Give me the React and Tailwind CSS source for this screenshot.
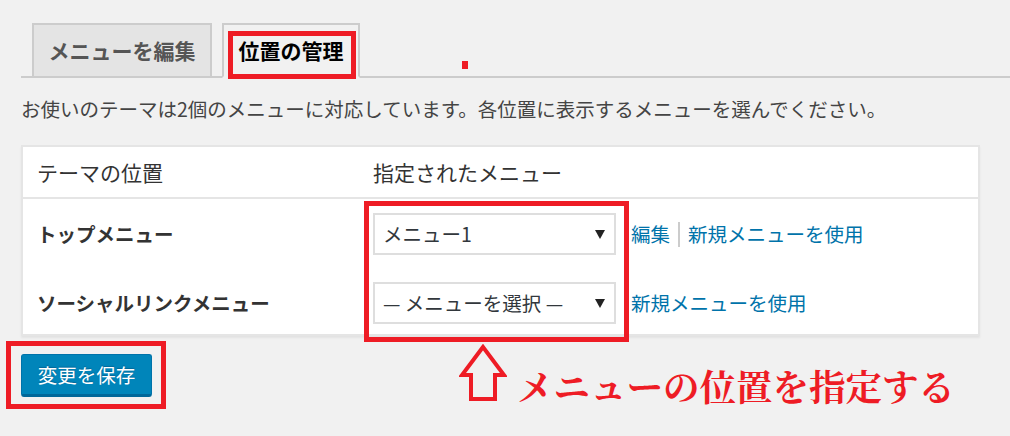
import React from "react";

const font = { fontFamily: '"Noto Sans CJK JP", "Noto Sans", sans-serif' };

function Arrow() {
  return (
    <svg width="48" height="58" viewBox="0 0 48 58" className="block">
      <polygon
        points="24,3 3,31 12,31 12,55 36,55 36,31 45,31"
        fill="none"
        stroke="#ee1c25"
        strokeWidth="4"
        strokeLinejoin="miter"
      />
    </svg>
  );
}

function Caret() {
  return (
    <svg width="10" height="9" viewBox="0 0 10 9" className="block">
      <polygon points="0,0 10,0 5,9" fill="#222" />
    </svg>
  );
}

function Select({ label }) {
  return (
    <div className="flex items-center justify-between w-[243px] h-[42px] border-2 border-[#dedede] bg-white pl-[8px] pr-[9px] text-[19.5px] text-[#32373c] leading-none">
      <span>{label}</span>
      <Caret />
    </div>
  );
}

export default function App() {
  return (
    <div className="w-full min-h-[436px] bg-[#f1f1f1] overflow-hidden" style={font}>
      {/* Tabs */}
      <div className="relative ml-[21px] mt-[23px] flex items-end gap-[10px] pl-[11px] border-b-2 border-[#cccccc] h-[55px]">
        <div className="-mb-[2px] flex items-center justify-center w-[180px] h-[55px] border-2 border-[#cccccc] bg-[#e4e4e4] text-[21px] font-bold text-[#555555] leading-none">
          メニューを編集
        </div>
        <div className="relative -mb-[2px] flex items-center justify-center w-[138px] h-[55px] border-2 border-[#cccccc] border-b-[#f1f1f1] bg-[#f1f1f1] text-[21px] font-bold text-black leading-none">
          位置の管理
          <div className="absolute left-[4px] top-[6px] w-[128px] h-[48px] border-[5px] border-[#ee1c25]" />
        </div>
        <div className="absolute left-[441px] top-[38px] w-[6px] h-[8px] bg-[#ee1c25]" />
      </div>

      {/* Description */}
      <p className="ml-[21px] mt-[17px] text-[19.5px] leading-[28px] text-[#444444]">
        お使いのテーマは2個のメニューに対応しています。各位置に表示するメニューを選んでください。
      </p>

      {/* Table */}
      <div className="relative ml-[21px] mt-[22px] w-[959px] border-2 border-[#e5e5e5] bg-white shadow-[0_2px_2px_rgba(0,0,0,0.06)]">
        <div className="flex items-center h-[52px] border-b-2 border-[#e5e5e5] text-[21px] text-[#333333] leading-none">
          <div className="w-[350px] pl-[14px]">テーマの位置</div>
          <div>指定されたメニュー</div>
        </div>
        <div className="flex flex-col gap-[27px] pt-[14px] pb-[10px]">
          <div className="flex items-center h-[42px]">
            <div className="w-[350px] pl-[14px] text-[19.5px] font-bold text-[#333333] leading-none">
              トップメニュー
            </div>
            <Select label="メニュー1" />
            <div className="flex items-center ml-[15px] text-[19.5px] text-[#0073aa] leading-none">
              <span>編集</span>
              <span className="mx-[8px] w-[2px] h-[25px] bg-[#cccccc]" />
              <span>新規メニューを使用</span>
            </div>
          </div>
          <div className="flex items-center h-[42px]">
            <div className="w-[350px] pl-[14px] text-[19.5px] font-bold text-[#333333] leading-none">
              ソーシャルリンクメニュー
            </div>
            <Select label="— メニューを選択 —" />
            <div className="ml-[15px] text-[19.5px] text-[#0073aa] leading-none">新規メニューを使用</div>
          </div>
        </div>
        <div className="absolute left-[341px] top-[54px] w-[265px] h-[141px] border-[5px] border-[#ee1c25]" />
      </div>

      {/* Footer row */}
      <div className="flex items-start ml-[21px]">
        <div className="relative mt-[18px]">
          <div className="flex items-center justify-center w-[131px] h-[43px] rounded-[3px] bg-[#0085ba] border border-[#0073aa] border-b-[3px] border-b-[#006799] text-[19.5px] text-white leading-none [text-shadow:0_-1px_1px_#006799]">
            変更を保存
          </div>
          <div className="absolute left-[-15px] top-[-13px] w-[160px] h-[68px] border-[5px] border-[#ee1c25]" />
        </div>
        <div className="ml-[307px] mt-[8px] flex items-end gap-[10px]">
          <Arrow />
          <span
            className="text-[36.5px] leading-[36px] text-[#ee1c25] font-bold -mb-[1px]"
            style={{ fontFamily: '"Noto Serif CJK JP", "Noto Sans CJK JP", serif' }}
          >
            メニューの位置を指定する
          </span>
        </div>
      </div>
    </div>
  );
}
